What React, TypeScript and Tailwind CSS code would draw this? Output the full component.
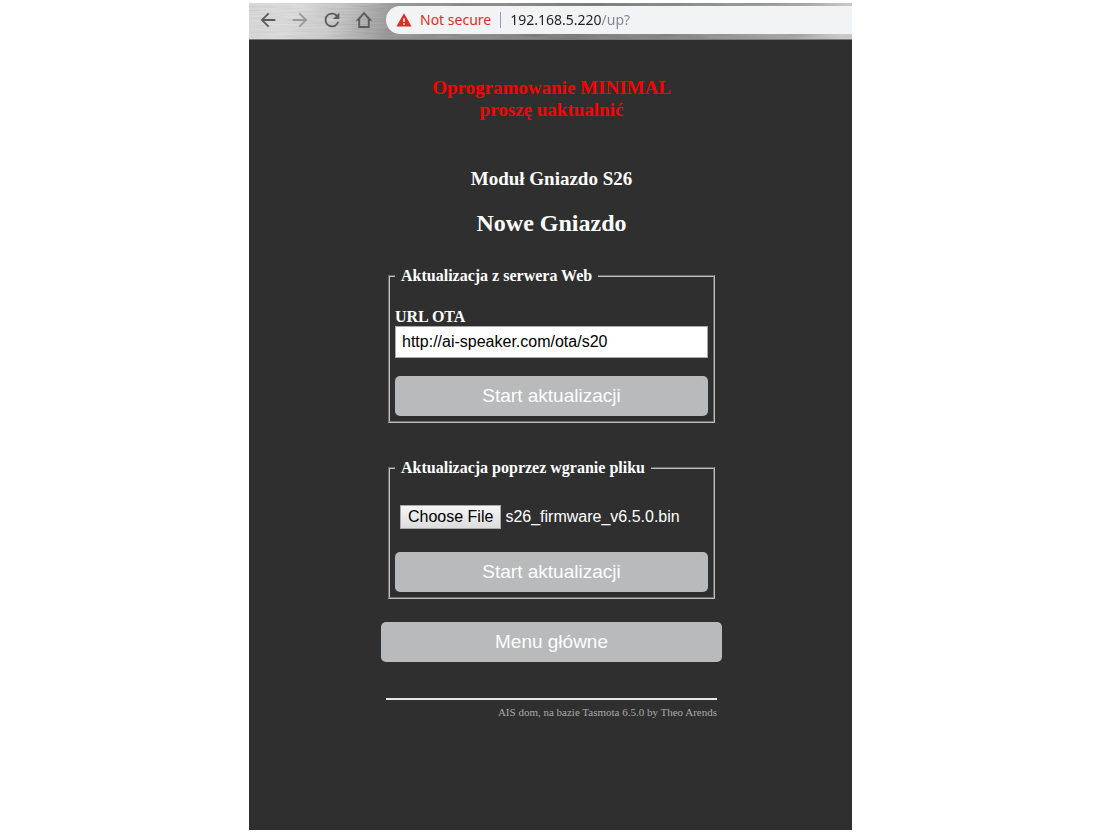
import { useRef } from "react";
import type { ReactNode } from "react";

const actionButton =
  "block h-10 w-full cursor-pointer rounded-[5px] bg-[#b8babc] text-center font-['Liberation_Sans',Arial,sans-serif] text-[19px] leading-10 text-[#faffff]";

function BrushedMetal() {
  return (
    <svg className="absolute inset-0 h-full w-full" aria-hidden="true">
      <defs>
        <linearGradient id="metal" x1="0" y1="0" x2="1" y2="0.02">
          <stop offset="0" stopColor="#d8d8d8" />
          <stop offset="0.08" stopColor="#dcdcdc" />
          <stop offset="0.15" stopColor="#c8c8c8" />
          <stop offset="0.25" stopColor="#8e8e8e" />
          <stop offset="0.42" stopColor="#808080" />
          <stop offset="0.55" stopColor="#6f7070" />
          <stop offset="0.75" stopColor="#828383" />
          <stop offset="0.92" stopColor="#a0a0a0" />
          <stop offset="1" stopColor="#cacaca" />
        </linearGradient>
        <filter id="brush" x="0" y="0" width="100%" height="100%">
          <feTurbulence type="fractalNoise" baseFrequency="0.03 0.7" numOctaves="2" seed="11" />
          <feColorMatrix values="1 0 0 0 0.05  1 0 0 0 0.05  1 0 0 0 0.05  0 0 0 0 0.16" />
        </filter>
      </defs>
      <rect width="100%" height="100%" fill="url(#metal)" />
      <rect width="100%" height="100%" filter="url(#brush)" />
    </svg>
  );
}

function NavButton({ label, className, children }: { label: string; className: string; children: ReactNode }) {
  return (
    <button type="button" aria-label={label} className={`flex h-8 w-8 items-center justify-center ${className}`}>
      <svg viewBox="0 0 24 24" className="h-[22px] w-[22px]" fill="currentColor" aria-hidden="true">
        {children}
      </svg>
    </button>
  );
}

function Toolbar() {
  return (
    <header className="relative h-[37px] overflow-hidden border-b border-[#777777]">
      <BrushedMetal />
      <div className="relative flex h-full items-center pb-[2px] pl-[3px]">
        <nav className="flex shrink-0">
          <NavButton label="Back" className="text-[#5a5a5a]">
            <path d="M20 11H7.83l5.59-5.59L12 4l-8 8 8 8 1.41-1.41L7.83 13H20v-2z" />
          </NavButton>
          <NavButton label="Forward" className="text-[#989898]">
            <path d="M4 13h12.17l-5.59 5.59L12 20l8-8-8-8-1.41 1.41L16.17 11H4v2z" />
          </NavButton>
          <NavButton label="Reload" className="text-[#5a5a5a]">
            <path d="M17.65 6.35A7.958 7.958 0 0 0 12 4a8 8 0 1 0 7.73 10h-2.08A6 6 0 1 1 12 6c1.66 0 3.14.69 4.22 1.78L13 11h7V4l-2.35 2.35z" />
          </NavButton>
          <NavButton label="Home" className="text-[#5a5a5a]">
            <path
              d="M12 3 3 12.8h2.8V20.6h12.4V12.8H21zM12 6.1l4.2 4.7v7.8H7.8v-7.8z"
              fillRule="evenodd"
            />
          </NavButton>
        </nav>
        <div className="ml-[6px] flex h-7 min-w-0 flex-1 items-center rounded-l-full bg-[#f1f3f4] pl-[10px] font-['Noto_Sans',sans-serif] text-sm">
          <svg viewBox="0 0 16 14" className="h-[14px] w-4 shrink-0" aria-hidden="true">
            <path d="M8 .3 15.6 13.5H.4z" fill="#d93025" />
            <path d="M7.2 5.5h1.6v3.5H7.2zM7.2 10.2h1.6v1.6H7.2z" fill="#ffffff" />
          </svg>
          <span className="ml-2 whitespace-nowrap text-[#d93025]">Not secure</span>
          <span className="ml-[9px] h-4 w-px shrink-0 bg-[#9aa0a6]" />
          <input
            type="text"
            aria-label="Address"
            defaultValue="192.168.5.220/up?"
            className="ml-[9px] min-w-0 flex-1 bg-linear-to-r from-[#202124] from-[92px] to-[#80868b] to-[92px] bg-clip-text text-transparent caret-black outline-none"
          />
        </div>
      </div>
    </header>
  );
}

function Panel({ title, className, children }: { title: string; className: string; children: ReactNode }) {
  return (
    <fieldset className={`mx-[7px] min-w-0 border-2 border-[#c0c0c0] px-[5px] pb-[5px] [border-style:groove] ${className}`}>
      <legend className="px-[6px] text-base leading-[18px] font-bold">{title}</legend>
      {children}
    </fieldset>
  );
}

export default function App() {
  const fileInput = useRef<HTMLInputElement>(null);

  return (
    <div className="flex min-h-screen flex-col bg-white pt-[3px] pb-1 pl-px">
      <div className="mx-auto flex w-full max-w-[603px] flex-1 flex-col bg-[#2f2f2f]">
        <Toolbar />
        <main className="mx-auto w-full max-w-[343px] pl-[2px] font-['Liberation_Serif','Times_New_Roman',serif] text-white">
          <div className="text-center">
            <h3 className="pt-[37px] text-[19px] leading-[22px] font-bold text-[#ff0000]">
              Oprogramowanie MINIMAL
              <br />
              proszę uaktualnić
            </h3>
            <h3 className="mt-[47px] text-[19px] leading-[22px] font-bold">Moduł Gniazdo S26</h3>
            <h2 className="mt-[19px] text-2xl leading-7 font-bold">Nowe Gniazdo</h2>
          </div>

          <Panel title="Aktualizacja z serwera Web" className="mt-[30px]">
            <label htmlFor="ota" className="mt-[23px] block text-base leading-[18px] font-bold">
              URL OTA
            </label>
            <input
              id="ota"
              type="text"
              defaultValue="http://ai-speaker.com/ota/s20"
              className="block h-8 w-full border border-[#a9a9a9] bg-white px-[6px] font-['Liberation_Sans',Arial,sans-serif] text-base text-black"
            />
            <button type="button" className={`mt-[18px] ${actionButton}`}>
              Start aktualizacji
            </button>
          </Panel>

          <Panel title="Aktualizacja poprzez wgranie pliku" className="mt-9">
            <div className="mt-7 flex items-center gap-1 pl-[5px] font-['Liberation_Sans',Arial,sans-serif] text-base leading-[22px]">
              <input ref={fileInput} type="file" aria-label="Choose File" className="hidden" />
              <button
                type="button"
                onClick={() => fileInput.current?.click()}
                className="h-6 border border-[#a9a9a9] bg-linear-to-b from-[#f6f6f6] to-[#dddddd] px-[7px] text-black"
              >
                Choose File
              </button>
              <span>s26_firmware_v6.5.0.bin</span>
            </div>
            <button type="button" className={`mt-[23px] ${actionButton}`}>
              Start aktualizacji
            </button>
          </Panel>

          <button type="button" className={`mt-[23px] ${actionButton}`}>
            Menu główne
          </button>

          <hr className="mx-[5px] mt-9 border-t-2 border-[#e8e8e8]" />
          <footer className="mx-[5px] mt-[5px] text-right text-[11px] leading-[14px]">
            <a href="#" className="text-[#aaaaaa]">
              AIS dom, na bazie Tasmota 6.5.0 by Theo Arends
            </a>
          </footer>
        </main>
      </div>
    </div>
  );
}
